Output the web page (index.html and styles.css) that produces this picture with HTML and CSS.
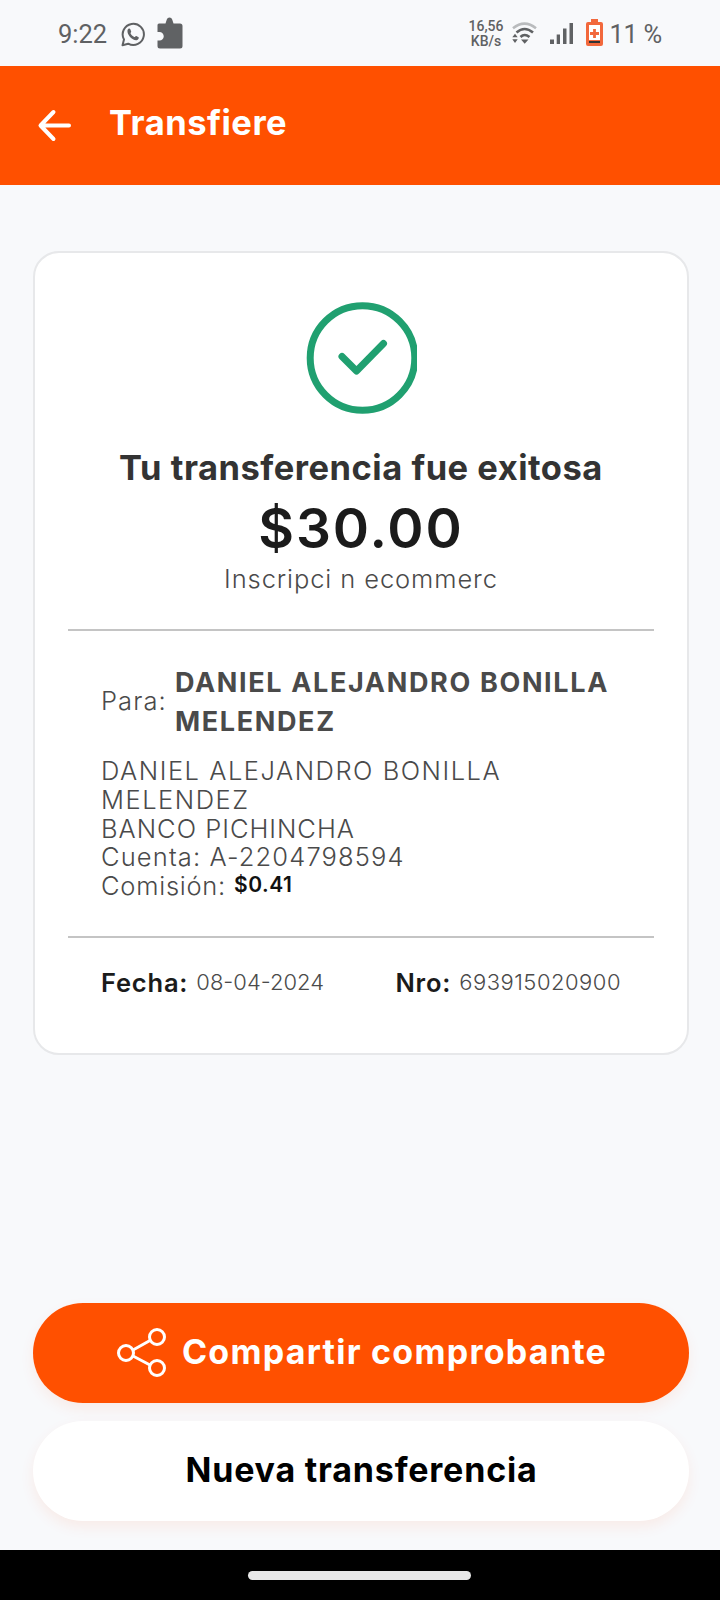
FILE: index.html
```
<!DOCTYPE html>
<html lang="es">
<head>
<meta charset="utf-8">
<title>Transfiere</title>
<link rel="stylesheet" href="styles.css">
</head>
<body>
<div class="screen">
  <div class="status">
    <span class="clock">9:22</span>
    <svg class="whatsapp" width="24" height="25" viewBox="0 0 24 25"><path d="M1.500 23.200 3 17.500A10.600 10.600 0 1 1 7.200 21.700Z" fill="none" stroke="#5f6163" stroke-width="2" stroke-linejoin="round"/><path d="M6.500 8.200C7 6.600 8.800 6 9.300 7.300L10.200 9.400C10.400 10.200 9.300 10.700 9.500 11.300 10.300 13 11.600 14.200 13.300 15 14 15.200 14.600 13.700 15.300 14L17.600 15.200C18.300 15.800 17.300 17.800 15.600 18.200 11.500 18.700 5.800 12.800 6.500 8.200Z" fill="#5f6163"/></svg>
    <svg class="puzzle" width="26" height="32" viewBox="0 0 26 32"><path d="M2 6.500H8.500L9.800 2.500Q10.400 .5 12.500 .5T15.200 2.500L16.500 6.500H23Q25.500 6.500 25.500 9V29Q25.500 31.500 23 31.500H3Q.5 31.500 .5 29V23.500H2.500A4.200 4.200 0 0 0 2.500 15H.5V8Q.5 6.500 2 6.500Z" fill="#606264"/></svg>
    <span class="gap"></span>
    <span class="speed"><span>16,56</span><span>KB/s</span></span>
    <svg class="wifi" width="25" height="23" viewBox="0 0 25 23" fill="none" stroke="#5f6163" stroke-width="2.600"><path d="M1 6.200Q12.500-3 24 6.200" stroke="#b9bbbd"/><path d="M4.500 10.500Q12.500 3.500 21 10.500"/><path d="M8.500 15Q12.500 11 17.500 15"/><path d="M9 17.500H16.500L12.700 21.800ZM.3 15.300 3 11.800 5.700 15.300ZM.3 17.300 3 21 5.700 17.300Z" fill="#5f6163" stroke="none"/></svg>
    <svg class="signal" width="24" height="21" viewBox="0 0 24 21" fill="#606264"><path d="M0 16.500H4V21H0ZM6.700 11.500H10V21H6.700ZM13 5.500H16.500V21H13ZM19.500 0H23V21H19.500Z"/></svg>
    <svg class="battery" width="17" height="27" viewBox="0 0 17 27"><path d="M5 0H12V3H15Q17 3 17 5V25Q17 27 15 27H2Q0 27 0 25V5Q0 3 2 3H5Z" fill="#f2683c"/><path d="M3 6H14V21H3Z" fill="#fff"/><path d="M3 22H14V24H3Z" fill="#333"/><path d="M8.500 10V19M4 14.500H13" stroke="#f2683c" stroke-width="2.800"/></svg>
    <span class="percent">11 %</span>
  </div>
  <header class="header">
    <svg class="back" width="34" height="34" viewBox="0 0 34 34" fill="none" stroke="#fff" stroke-width="4" stroke-linecap="round" stroke-linejoin="round"><path d="M16.500 3 3.500 16.500 16.500 30M4 16.500H32"/></svg>
    <h1 class="title">Transfiere</h1>
  </header>
  <main class="main">
    <section class="card">
      <svg class="check" width="112" height="112" viewBox="0 0 112 112" fill="none" stroke="#20a070" stroke-width="7"><circle cx="57.500" cy="56" r="52.300"/><path d="M37 54.500 51.500 69 78.500 41.500" stroke-linecap="round" stroke-linejoin="round"/></svg>
      <h2 class="success">Tu transferencia fue exitosa</h2>
      <p class="amount">$30.00</p>
      <p class="concept">Inscripci n ecommerc</p>
      <div class="recipient">
        <span class="para">Para:</span>
        <strong class="name">DANIEL ALEJANDRO BONILLA<br>MELENDEZ</strong>
      </div>
      <div class="details">
        <p class="holder">DANIEL ALEJANDRO BONILLA</p>
        <p class="holder">MELENDEZ</p>
        <p class="bank">BANCO PICHINCHA</p>
        <p class="account">Cuenta: A-2204798594</p>
        <p class="commission">Comisión:<b class="fee">$0.41</b></p>
      </div>
      <div class="meta">
        <b>Fecha:</b><span class="value date">08-04-2024</span>
        <b>Nro:</b><span class="value number">693915020900</span>
      </div>
    </section>
    <div class="actions">
      <button class="button primary"><svg class="share" width="50" height="50" viewBox="0 0 50 50" fill="none" stroke="#fff" stroke-width="3"><circle cx="9" cy="25" r="7.500"/><circle cx="40" cy="9" r="7.500"/><circle cx="40" cy="40" r="7.500"/><path d="M16 22 33 12.500M16 28 33 37"/></svg><span>Compartir comprobante</span></button>
      <button class="button">Nueva transferencia</button>
    </div>
  </main>
  <div class="navbar"><span class="handle"></span></div>
</div>
</body>
</html>
```
FILE: styles.css
```
* { box-sizing: border-box; }
body { margin: 0; font-family: Inter, "Liberation Sans", sans-serif; }
h1, h2, p { margin: 0; }
.screen { width: 720px; height: 1600px; display: flex; flex-direction: column; background: #f8f9fb; }
.status { height: 66px; display: flex; align-items: center; padding: 2px 58px 0 58px; font-family: Roboto, sans-serif; color: #5f6163; }
.clock, .percent { font-size: 25.500px; line-height: 30px; white-space: nowrap; }
.whatsapp { margin-left: 14px; }
.puzzle { margin-left: 12px; margin-top: -3px; }
.gap { flex: 1; }
.speed { display: flex; flex-direction: column; align-items: center; font-size: 14px; font-weight: 500; line-height: 15px; }
.wifi { margin-left: 8px; margin-top: -2px; }
.signal { margin-left: 13px; margin-top: -2px; }
.battery { margin-left: 12px; margin-top: -3px; }
.percent { margin-left: 7px; letter-spacing: -.3px; }
.header { height: 119px; background: #ff5000; color: #fff; display: flex; align-items: center; padding-left: 37px; }
.title { margin-left: 38px; margin-top: -6px; font-size: 34.500px; line-height: 40px; font-weight: 700; letter-spacing: .5px; }
.main { flex: 1; padding: 66px 31px 0 33px; }
.card { height: 804px; border: 2px solid #e7e8ea; border-radius: 26px; background: #fff; padding: 49px 33px 0; text-align: center; }
.check { display: block; margin: 0 auto 34px; }
.success { font-size: 34.500px; line-height: 39px; font-weight: 700; letter-spacing: .5px; color: #333; white-space: nowrap; }
.amount { margin-top: 6px; font-size: 55px; line-height: 71px; font-weight: 600; letter-spacing: 1.900px; color: #1b1b1b; }
.concept { font-size: 25.500px; line-height: 30px; font-weight: 300; letter-spacing: .9px; color: #4a4a4a; }
.recipient { margin-top: 35px; border-top: 2px solid #c4c4c4; padding: 33px 0 0 33px; display: flex; align-items: center; text-align: left; color: #4a4a4a; }
.para { margin-top: -4px; font-size: 25.500px; font-weight: 300; letter-spacing: 1.100px; }
.name { margin-left: 8px; font-size: 27px; line-height: 38.500px; font-weight: 700; letter-spacing: 1.650px; white-space: nowrap; }
.details { padding: 16px 0 35px 33px; border-bottom: 2px solid #c4c4c4; text-align: left; font-size: 25.500px; line-height: 28.750px; font-weight: 300; color: #4a4a4a; white-space: nowrap; }
.holder { letter-spacing: 1.520px; }
.bank { letter-spacing: 1px; }
.account { letter-spacing: 1.130px; }
.commission { display: flex; letter-spacing: .75px; }
.fee { margin: -1px 0 0 8px; font-size: 21px; font-weight: 600; letter-spacing: .5px; color: #111; }
.meta { display: flex; padding: 30px 33px 0; line-height: 30px; color: #1b1b1b; font-size: 25.500px; white-space: nowrap; }
.meta b { font-weight: 600; letter-spacing: .8px; }
.value { margin: -1px 0 0 8px; font-size: 22px; font-weight: 300; color: #4a4a4a; }
.date { margin-right: auto; }
.number { letter-spacing: .5px; }
.actions { margin-top: 248px; display: grid; gap: 18px; }
.button { height: 100px; border: 0; border-radius: 50px; display: flex; align-items: center; justify-content: center; background: #fff; color: #000; font-family: inherit; font-size: 34px; font-weight: 700; letter-spacing: .8px; padding: 0 0 4px 1px; box-shadow: 0 6px 14px rgba(255, 80, 0, .08); white-space: nowrap; }
.primary { padding-left: 2px; background: #ff5000; color: #fff; letter-spacing: 1.250px; }
.share { margin: 4px 15px 0 0; }
.navbar { height: 50px; background: #000; display: flex; justify-content: center; padding: 21px 2px 0 0; }
.handle { width: 223px; height: 9px; border-radius: 5px; background: #e8e8e8; }
```
